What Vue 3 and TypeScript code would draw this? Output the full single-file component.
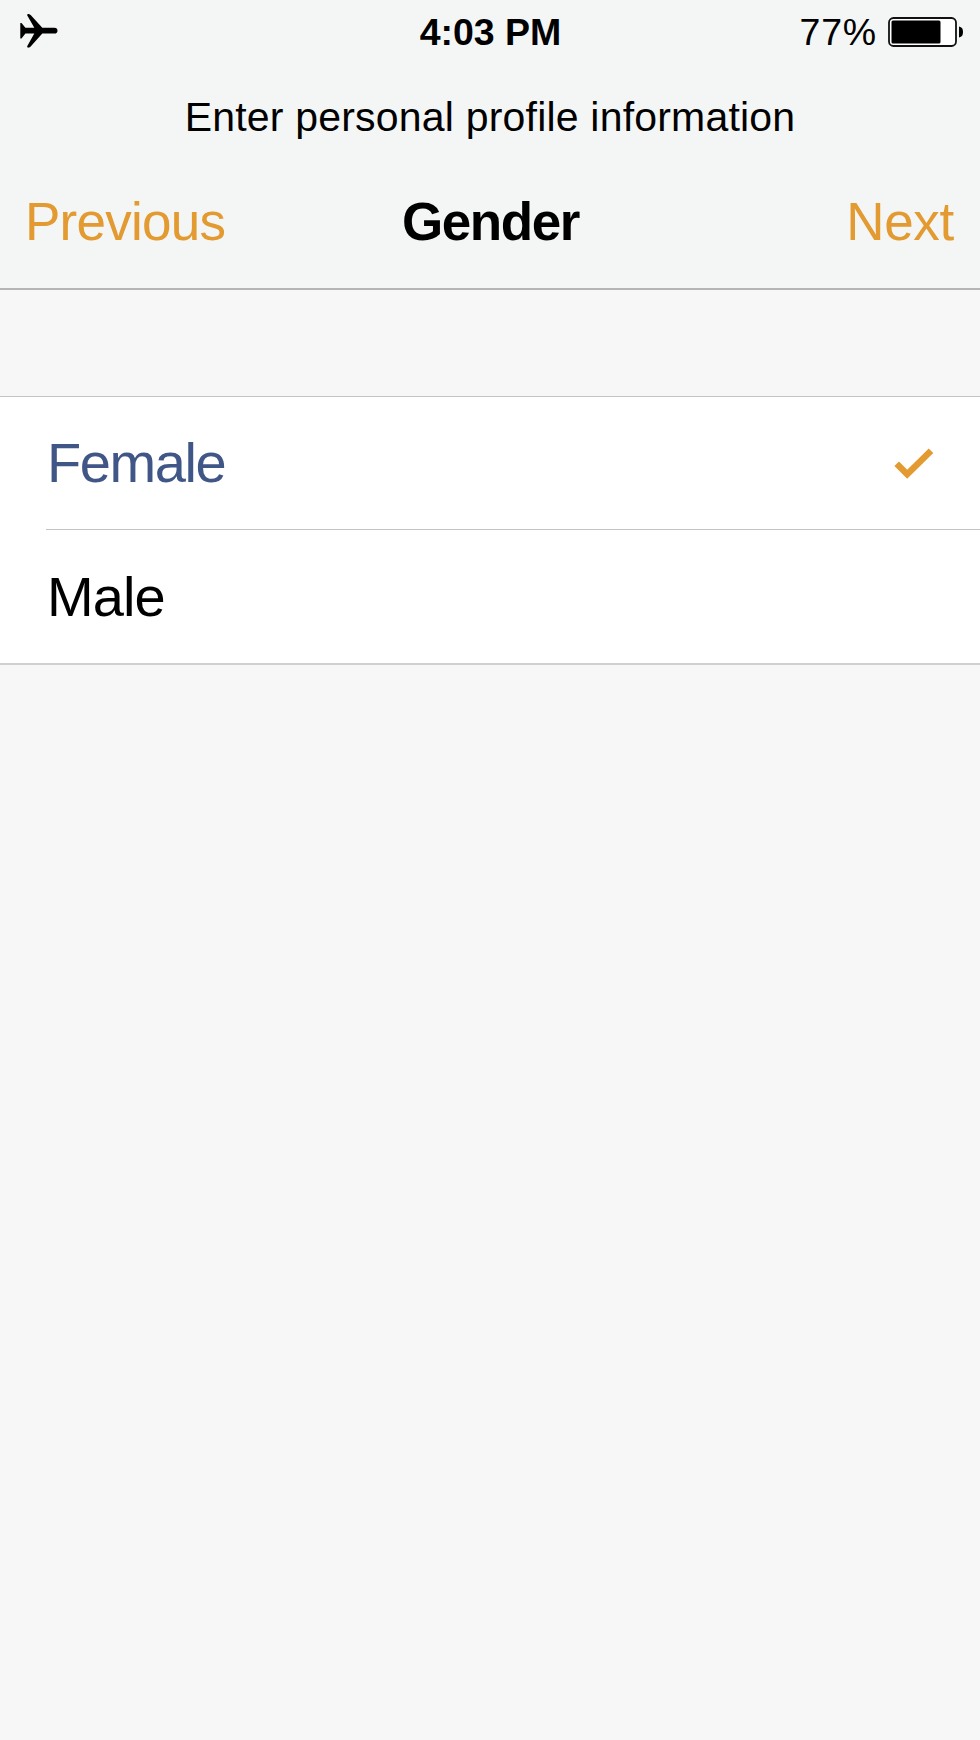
<script setup lang="ts">
import { ref } from 'vue'

type Gender = 'Female' | 'Male'

const options: Gender[] = ['Female', 'Male']
const selected = ref<Gender>('Female')
</script>

<template>
  <main class="screen">
    <header class="header">
      <div class="status">
        <svg class="plane" width="38" height="36" viewBox="0 0 38 36">
          <path
            d="M.3 10h1.200l3.900 4.800h8.900L7.300 2.600C6.900 1.500 7.600.8 8.700 1c.9.1 1.600.6 2.200 1.300L22.300 14.800h12.200c1.900 0 3 1.300 3 2.900s-1.100 2.900-3 2.900H22.300L10.900 33.300c-.6.7-1.300 1.200-2.200 1.300-1.100.2-1.800-.5-1.400-1.600l7-12.400H5.400l-3.900 4.800H.3z"
          />
        </svg>
        <span class="time">4:03 PM</span>
        <div class="power">
          <span class="percent">77%</span>
          <svg class="battery" width="77" height="31" viewBox="0 0 77 31">
            <rect x="1" y="1" width="67" height="28" rx="4.500" fill="#fff" stroke="#111" stroke-width="1.800" />
            <rect x="3.500" y="3.500" width="49" height="23" rx="1.500" />
            <path d="M71 9.500c3 .6 4 2.500 4 5.500s-1 4.900-4 5.500z" />
          </svg>
        </div>
      </div>
      <p class="prompt">Enter personal profile information</p>
      <nav class="nav">
        <button class="action previous" type="button">Previous</button>
        <h1 class="title">Gender</h1>
        <button class="action next" type="button">Next</button>
      </nav>
    </header>

    <ul class="list">
      <li
        v-for="option in options"
        :key="option"
        class="row"
        :class="{ selected: option === selected }"
        @click="selected = option"
      >
        <span class="label">{{ option }}</span>
        <svg v-if="option === selected" class="check" width="40" height="32" viewBox="0 0 40 32">
          <path d="M2.700 15.700 13.200 26.200 37 2.700" fill="none" stroke="#e29a31" stroke-width="6.500" />
        </svg>
      </li>
    </ul>
  </main>
</template>

<style>
body {
  background: #f7f7f7;
}
</style>

<style scoped>
.screen {
  width: 980px;
  height: 1740px;
  overflow: hidden;
  background: #f7f7f7;
  color: #000;
  font-family: "Liberation Sans", Arial, sans-serif;
}

.header {
  box-sizing: border-box;
  height: 290px;
  background: #f4f6f5;
  border-bottom: 2px solid #b5b5b5;
}

.status {
  display: grid;
  grid-template-columns: 1fr auto 1fr;
  align-items: center;
  height: 64px;
  padding: 0 15px 0 20px;
  font-size: 37.5px;
  line-height: 64px;
}

.plane {
  margin-bottom: 2px;
}

.time {
  padding-right: 4px;
  font-weight: 700;
}

.power {
  display: flex;
  align-items: center;
  justify-content: flex-end;
  gap: 11px;
}

.percent {
  letter-spacing: 0.8px;
}

.prompt {
  margin: 0;
  padding-top: 1px;
  font-size: 41px;
  line-height: 104px;
  letter-spacing: 0.2px;
  text-align: center;
}

.nav {
  display: grid;
  grid-template-columns: 1fr auto 1fr;
  height: 106px;
  padding: 0 26px 0 25px;
  font-size: 53px;
  line-height: 106px;
}

.action {
  padding: 0;
  border: 0;
  background: none;
  color: #e29a31;
  font: inherit;
}

.previous {
  justify-self: start;
  letter-spacing: -0.75px;
}

.next {
  justify-self: end;
  letter-spacing: -0.3px;
}

.title {
  margin: 0;
  padding-left: 2px;
  font-size: inherit;
  letter-spacing: -1.4px;
}

.list {
  margin: 106px 0 0;
  padding: 0;
  list-style: none;
  background: #fff;
  border-top: 1px solid #c4c4c4;
  border-bottom: 2px solid #d0d0d0;
}

.row {
  display: flex;
  align-items: center;
  justify-content: space-between;
  height: 132px;
  margin-left: 46px;
  padding-left: 1px;
  padding-right: 46px;
  font-size: 56px;
  letter-spacing: -0.9px;
}

.row + .row {
  height: 133px;
  border-top: 1px solid #c4c4c4;
}

.selected {
  color: #405686;
  letter-spacing: -1.4px;
}

.selected .label {
  padding-bottom: 2px;
}

.check {
  margin-top: 2px;
}
</style>
